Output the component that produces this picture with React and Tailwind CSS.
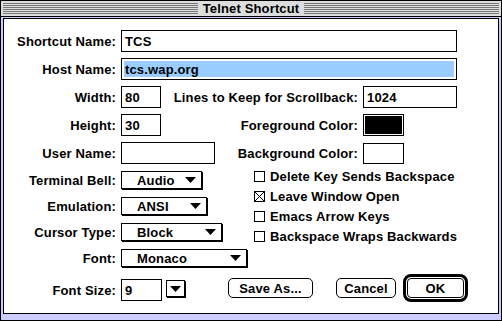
import React from "react";

const FONT = "font-['Liberation_Sans',Arial,sans-serif] font-bold text-[13px] leading-none tracking-[0.15px] text-black";

function Label({ children, className = "w-[117px]" }) {
  return <div className={`${className} text-right pr-[5px] whitespace-nowrap`}>{children}</div>;
}

function Field({ className, children, selected }) {
  return (
    <div className={`${className} h-[22px] border border-black bg-white flex items-center px-[2px]`}>
      {selected ? (
        <div className="w-full h-[16px] bg-[#99ccff] flex items-center pl-[1px]">{children}</div>
      ) : (
        <div className="pl-[1px]">{children}</div>
      )}
    </div>
  );
}

function Tri() {
  return (
    <svg width="11" height="6" viewBox="0 0 11 6" className="shrink-0">
      <path d="M0 0 H11 L5.5 6 Z" fill="#000" />
    </svg>
  );
}

function Popup({ className, children }) {
  return (
    <div className={`${className} h-[18px] border border-black bg-white shadow-[1px_1px_0_#000] flex items-center justify-between pl-[15px] pr-[5px]`}>
      <span>{children}</span>
      <Tri />
    </div>
  );
}

function Check({ checked, children }) {
  return (
    <div className="h-[20px] flex items-center">
      <div className="w-[11px] h-[11px] border border-black bg-white shrink-0">
        {checked && (
          <svg width="9" height="9" viewBox="0 0 9 9" className="block">
            <path d="M0 0 L9 9 M9 0 L0 9" stroke="#000" strokeWidth="1" />
          </svg>
        )}
      </div>
      <span className="ml-[5px] whitespace-nowrap">{children}</span>
    </div>
  );
}

function Btn({ className, children }) {
  return (
    <div className={`${className} h-[20px] border border-black rounded-[5px] bg-white flex items-center justify-center`}>
      {children}
    </div>
  );
}

const stripes =
  "flex-1 h-[11px] bg-[repeating-linear-gradient(to_bottom,#777777_0px,#777777_1px,#dddddd_1px,#dddddd_2px)]";

export default function App() {
  return (
    <div className={`w-[502px] h-[321px] bg-[#ccccff] border border-black flex flex-col ${FONT}`}>
      <div className="h-[16px] bg-[#dddddd] border-b border-black flex items-center px-[2px] shrink-0">
        <div className={stripes} />
        <div className="px-[5px]">Telnet Shortcut</div>
        <div className={stripes} />
      </div>
      <div className="flex-1 pt-[1px] px-[2px] pb-[6px] flex flex-col">
        <div className="flex-1 border border-black bg-white flex flex-col pt-[11px]">
          {/* top rows */}
          <div className="flex flex-col gap-[6px]">
            <div className="flex items-center">
              <Label>Shortcut Name:</Label>
              <Field className="w-[336px]">TCS</Field>
            </div>
            <div className="flex items-center">
              <Label>Host Name:</Label>
              <Field className="w-[336px]" selected>tcs.wap.org</Field>
            </div>
            <div className="flex items-center">
              <Label>Width:</Label>
              <Field className="w-[40px]">80</Field>
              <Label className="w-[202px]">Lines to Keep for Scrollback:</Label>
              <Field className="w-[94px]">1024</Field>
            </div>
            <div className="flex items-center">
              <Label>Height:</Label>
              <Field className="w-[40px]">30</Field>
              <Label className="w-[202px]">Foreground Color:</Label>
              <div className="w-[41px] h-[22px] border border-black bg-white p-[1px]">
                <div className="w-full h-full bg-black" />
              </div>
            </div>
            <div className="flex items-center">
              <Label>User Name:</Label>
              <Field className="w-[94px]"></Field>
              <Label className="w-[148px]">Background Color:</Label>
              <div className="w-[41px] h-[21px] border border-black bg-white" />
            </div>
          </div>

          {/* middle section */}
          <div className="flex mt-[2px]">
            <div className="w-[250px] pt-[5px] flex flex-col gap-[8px]">
              <div className="flex items-center">
                <Label>Terminal Bell:</Label>
                <Popup className="w-[81px]">Audio</Popup>
              </div>
              <div className="flex items-center">
                <Label>Emulation:</Label>
                <Popup className="w-[86px]">ANSI</Popup>
              </div>
              <div className="flex items-center">
                <Label>Cursor Type:</Label>
                <Popup className="w-[101px]">Block</Popup>
              </div>
              <div className="flex items-center">
                <Label>Font:</Label>
                <Popup className="w-[126px]">Monaco</Popup>
              </div>
            </div>
            <div className="flex flex-col">
              <Check>Delete Key Sends Backspace</Check>
              <Check checked>Leave Window Open</Check>
              <Check>Emacs Arrow Keys</Check>
              <Check>Backspace Wraps Backwards</Check>
            </div>
          </div>

          {/* bottom row */}
          <div className="flex items-start mt-[7px]">
            <div className="flex items-center mt-[5px]">
              <Label>Font Size:</Label>
              <Field className="w-[41px]">9</Field>
            </div>
            <div className="mt-[6px] ml-[4px] w-[19px] h-[17px] border border-black bg-white shadow-[1px_1px_0_#000] flex items-center justify-center">
              <Tri />
            </div>
            <Btn className="w-[85px] mt-[4px] ml-[43px]">Save As...</Btn>
            <Btn className="w-[60px] mt-[4px] ml-[23px]">Cancel</Btn>
            <div className="ml-[7px] w-[65px] h-[28px] border-[3px] border-black rounded-[8px] p-[1px] bg-white">
              <div className="w-full h-full border border-black rounded-[4px] flex items-center justify-center">OK</div>
            </div>
          </div>
        </div>
      </div>
    </div>
  );
}
